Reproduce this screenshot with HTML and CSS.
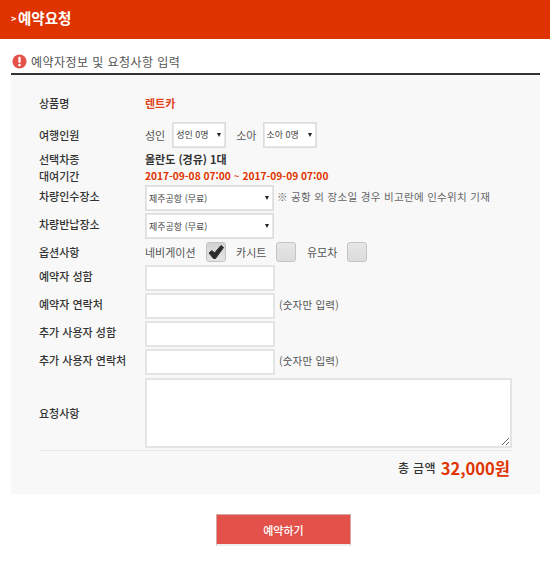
FILE: index.html
```html
<!DOCTYPE html>
<html lang="ko">
<head>
<meta charset="utf-8">
<title>예약요청</title>
<link rel="stylesheet" href="styles.css">
</head>
<body>
<header class="top"><span class="chev">&gt;</span><h1>예약요청</h1></header>
<main class="wrap">
  <h2 class="sec"><svg class="alert" viewBox="0 0 16 16" width="15" height="15"><circle cx="8" cy="8" r="7.5" fill="#e2524b"/><rect x="6.8" y="3" width="2.4" height="6.4" rx="1" fill="#fff"/><circle cx="8" cy="11.8" r="1.4" fill="#fff"/></svg><span>예약자정보 및 요청사항 입력</span></h2>
  <form class="panel">
    <div class="row r-name"><div class="lab">상품명</div><div class="val prod">렌트카</div></div>
    <div class="row r-people"><div class="lab">여행인원</div><div class="val">
      <span class="t">성인</span><span class="sel small"><select><option>성인 0명</option></select></span>
      <span class="t t2">소아</span><span class="sel small"><select><option>소아 0명</option></select></span>
    </div></div>
    <div class="row r-car"><div class="lab">선택차종</div><div class="val strong">올란도 (경유) 1대</div></div>
    <div class="row r-date"><div class="lab">대여기간</div><div class="val date"><b>2017-09-08 07:00</b> ~ <b>2017-09-09 07:00</b></div></div>
    <div class="row r-ctl"><div class="lab">차량인수장소</div><div class="val"><span class="sel wide"><select><option>제주공항 (무료)</option></select></span><span class="note">※ 공항 외 장소일 경우 비고란에 인수위치 기재</span></div></div>
    <div class="row r-ctl"><div class="lab">차량반납장소</div><div class="val"><span class="sel wide"><select><option>제주공항 (무료)</option></select></span></div></div>
    <div class="row r-opt"><div class="lab">옵션사항</div><div class="val">
      <span class="t o1">네비게이션</span><span class="chk on"><svg viewBox="0 0 20 20" width="20" height="20"><path d="M3 11 L6 8.5 L8.5 11 L15 3.5 L17.5 5.5 L9.5 16.5 L7.5 16.5 Z" fill="#2b2b2b" stroke="#2b2b2b" stroke-width="1" stroke-linejoin="round"/></svg></span>
      <span class="t o2">카시트</span><span class="chk"></span>
      <span class="t o3">유모차</span><span class="chk"></span>
    </div></div>
    <div class="row r-in"><div class="lab">예약자 성함</div><div class="val"><input type="text"></div></div>
    <div class="row r-in"><div class="lab">예약자 연락처</div><div class="val"><input type="text"><span class="hint">(숫자만 입력)</span></div></div>
    <div class="row r-in"><div class="lab">추가 사용자 성함</div><div class="val"><input type="text"></div></div>
    <div class="row r-in"><div class="lab">추가 사용자 연락처</div><div class="val"><input type="text"><span class="hint">(숫자만 입력)</span></div></div>
    <div class="row r-ta"><div class="lab">요청사항</div><div class="val"><textarea></textarea></div></div>
    <div class="total"><span class="tl">총 금액</span><span class="amt">32,000원</span></div>
  </form>
  <div class="act"><button type="button" class="btn">예약하기</button></div>
</main>
</body>
</html>
```
FILE: styles.css
```css
* { box-sizing: border-box; }
html, body { margin: 0; padding: 0; background: #fff; }
body { font-family: "Noto Sans CJK KR", "Noto Sans", sans-serif; font-size: 11px; color: #333; width: 550px; height: 567px; overflow: hidden; }
.top { height: 39px; background: #e03400; display: flex; align-items: center; padding-left: 11px; padding-bottom: 3px; color: #fff; }
.chev { font-size: 9px; font-weight: 700; width: 7px; }
.top h1 { margin: 0; font-size: 14.5px; font-weight: 700; line-height: 20px; }
.wrap { padding: 0 10px 0 11px; }
.sec { margin: 0; height: 36px; padding-top: 11px; padding-left: 1px; border-bottom: 2px solid #333; display: flex; align-items: center; gap: 4px; font-size: 12px; font-weight: 400; color: #555; letter-spacing: .45px; }
.sec span { line-height: 14px; }
.alert { flex: none; }
.panel { background: #f8f8f8; height: 419px; padding: 0 28px; display: flex; flex-direction: column; }
.row { display: flex; align-items: center; }
.lab { width: 106px; flex: none; font-size: 11px; font-weight: 500; color: #333; }
.val { display: flex; align-items: center; flex: 1; min-width: 0; }
.r-name { height: 45px; padding-top: 11px; }
.prod { color: #e2431c; font-weight: 700; }
.r-people { height: 29px; }
.t { font-size: 11px; color: #555; }
.t2 { margin-left: 10px; }
.sel { display: inline-block; position: relative; margin-left: 7px; }
.sel select { appearance: none; -webkit-appearance: none; display: block; width: 100%; height: 100%; border: 1px solid #ddd; box-shadow: inset 0 0 0 1px #e6e6e6; background: #fff; font-family: inherit; font-size: 9px; color: #444; padding: 0 3px; border-radius: 0; }
.sel::after { content: ""; position: absolute; right: 5px; top: 50%; margin-top: -2px; border: 2.5px solid transparent; border-top: 4px solid #222; border-bottom: 0; }
.small { width: 54px; height: 26px; }
.t2 + .small { margin-left: 6px; }
.wide { width: 129px; height: 26px; margin-left: 0; }
.r-car { height: 18px; padding-top: 2px; }
.strong { font-weight: 700; color: #333; }
.r-date { height: 17px; }
.date { color: #e03400; font-size: 10.2px; }
.date b { font-weight: 700; margin: 0 3px 0 0; }
.date b + b { margin-left: 3px; }
.r-ctl { height: 28px; }
.r-ctl .lab, .r-in .lab, .note, .hint { padding-bottom: 4px; }
.note { margin-left: 3px; font-size: 10.5px; color: #666; letter-spacing: .32px; }
.r-opt { height: 24px; }
.o1 { color: #555; }
.o2 { margin-left: 10.5px; }
.o3 { margin-left: 10.5px; }
.chk { display: block; width: 20px; height: 20px; margin-left: 10px; border: 1px solid #c4c4c4; border-radius: 3px; background: linear-gradient(#e6e6e6, #dcdcdc); }
.chk.on { background: linear-gradient(#d2d2d2, #e4e4e4); }
.chk svg { display: block; margin: -1px; }
.r-in { height: 28px; }
input, textarea { border: 2px solid #e4e4e4; background: #fff; border-radius: 0; display: block; }
input { width: 130px; height: 26px; }
.hint { margin-left: 4px; font-size: 10.5px; color: #555; letter-spacing: .2px; }
.r-ta { height: 73px; }
textarea { width: 368px; height: 70px; }
.total { margin: 1px 0 0; width: 473px; border-top: 1px solid #e8e8e8; display: flex; justify-content: flex-end; align-items: center; height: 34px; padding-right: 2px; gap: 5px; }
.tl { font-size: 12px; font-weight: 500; color: #333; letter-spacing: .3px; }
.amt { font-size: 16.5px; font-weight: 700; color: #e03400; }
.act { display: flex; justify-content: center; padding: 20px 0 0 16px; }
.btn { width: 135px; height: 32px; background: #e2524b; color: #fff; border: 1px solid #d9a8a5; border-bottom: 2px solid #eee; font-family: inherit; font-size: 11px; font-weight: 500; padding: 0; }
```
